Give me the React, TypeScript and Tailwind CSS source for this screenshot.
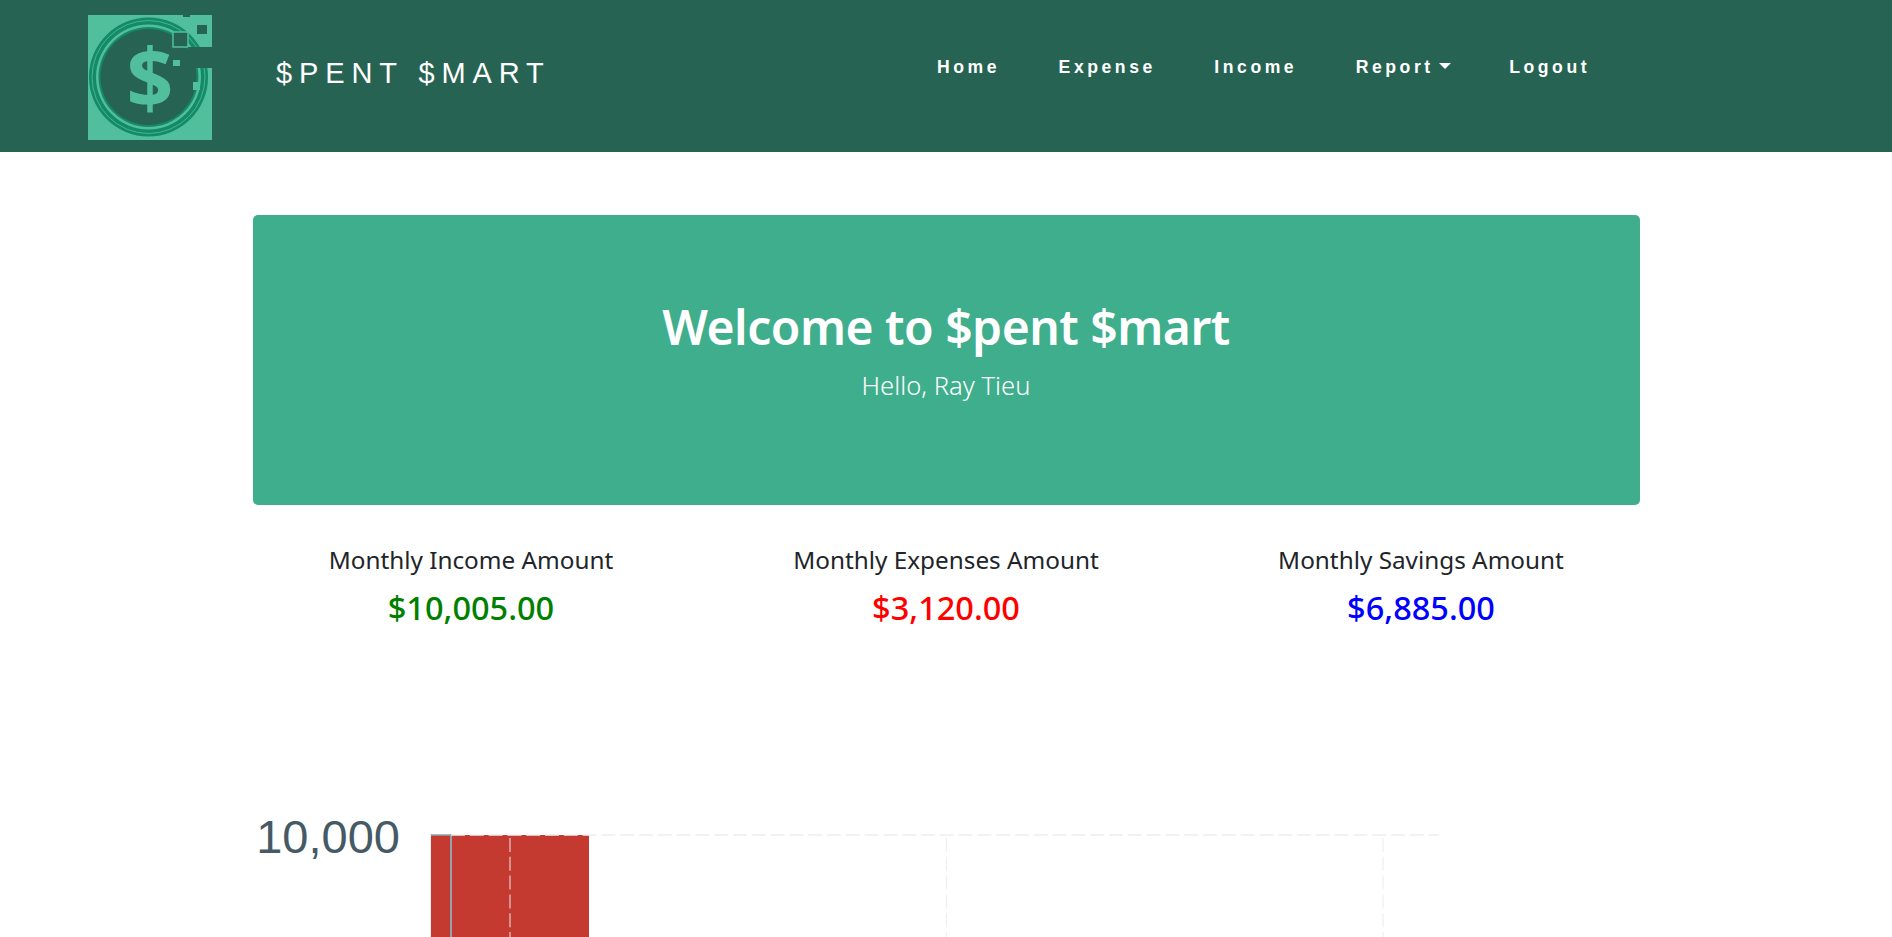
function Logo() {
  return (
    <svg width="124" height="125" viewBox="0 0 124 125" className="shrink-0">
      <rect width="124" height="125" fill="#52bf9c" />
      <circle cx="60.5" cy="62" r="59.5" fill="#148a66" />
      <circle cx="60.5" cy="62" r="56.5" fill="none" stroke="#52bf9c" strokeWidth="0.8" />
      <circle cx="60.5" cy="62" r="52.5" fill="#52bf9c" />
      <circle cx="60.5" cy="62" r="50" fill="#148a66" />
      <circle cx="60.5" cy="62" r="48" fill="#276352" />
      <text x="62" y="93" textAnchor="middle" fontFamily="'Open Sans', sans-serif" fontWeight="700" fontSize="82" fill="#52bf9c">$</text>
      <rect x="85" y="17" width="15" height="15" fill="#276352" stroke="#52bf9c" strokeWidth="1.5" />
      <rect x="109" y="10" width="10" height="9" fill="#276352" />
      <rect x="100" y="32" width="24" height="21" fill="#276352" />
      <rect x="85" y="45" width="7" height="6" fill="#52bf9c" />
      <rect x="105" y="67" width="7" height="8" fill="#52bf9c" />
      <rect x="95" y="0" width="7" height="2" fill="#276352" />
    </svg>
  );
}

const links = ["Home", "Expense", "Income"];

function Chart() {
  return (
    <svg width="1892" height="127" viewBox="0 0 1892 127" className="block">
      <rect x="430" y="24" width="159" height="103" fill="#c43a31" />
      <path d="M430 24H451" stroke="#90a4ae" strokeWidth="1.5" />
      <path d="M430.5 23.5V127" stroke="#eceff1" strokeWidth="1" />
      <path d="M451 23V127" stroke="#90a4ae" strokeWidth="2" />
      <path d="M451 24H1439" stroke="#eceff1" strokeWidth="1.5" strokeDasharray="14 4.8" />
      <path d="M510 27V127" stroke="#eceff1" strokeWidth="1.2" strokeOpacity="0.8" strokeDasharray="14 4.8" />
      <path d="M946.5 27V127" stroke="#eceff1" strokeWidth="1.2" strokeDasharray="14 4.8" />
      <path d="M1383 27V127" stroke="#eceff1" strokeWidth="1.2" strokeDasharray="14 4.8" />
      <text x="400" y="42" textAnchor="end" fontFamily="'Liberation Sans', Arial, sans-serif" fontSize="47" fill="#455a64">10,000</text>
    </svg>
  );
}

export default function App() {
  return (
    <div className="h-[937px] overflow-hidden bg-white font-['Noto_Sans',sans-serif] text-[#212529]">
      <header className="flex h-[152px] items-start bg-[#276352] pl-[88px] font-['Liberation_Sans',Arial,sans-serif] text-white">
        <div className="pt-[15px]"><Logo /></div>
        <div className="ml-[64px] w-[300px] shrink-0 pt-[55px] text-[29px] leading-[36px] tracking-[6.9px]">$PENT $MART</div>
        <nav className="ml-[361px] flex items-center gap-[58.5px] pt-[57px] text-[17.6px] leading-5 font-bold tracking-[3.55px]">
          {links.map((l) => (
            <a key={l}>{l}</a>
          ))}
          <a className="flex items-center">
            Report
            <span className="mb-[2px] ml-[5px] h-0 w-0 border-x-[6px] border-t-[6px] border-x-transparent border-t-white" />
          </a>
          <a>Logout</a>
        </nav>
      </header>
      <main className="pt-[63px]">
        <section className="mx-auto flex h-[290px] w-[1387px] flex-col items-center rounded-[5px] bg-[#3fae8d] pt-[78px] text-white">
          <h1 className="text-[48px] leading-[68px] font-semibold tracking-[-0.5px]">Welcome to $pent $mart</h1>
          <p className="mt-[8px] text-[25.6px] leading-[34px] font-light">Hello, Ray Tieu</p>
        </section>
        <section className="mx-auto mt-[39px] grid w-[1425px] grid-cols-3 text-center">
          {[
            ["Monthly Income Amount", "$10,005.00", "text-[#008000]"],
            ["Monthly Expenses Amount", "$3,120.00", "text-[#ff0000]"],
            ["Monthly Savings Amount", "$6,885.00", "text-[#0000ff]"],
          ].map(([a, b, c]) => (
            <div key={a}>
              <div className="text-[24.3px] leading-[32px]">{a}</div>
              <div className={`mt-[10px] text-[32.5px] leading-[44px] font-medium ${c}`}>{b}</div>
            </div>
          ))}
        </section>
        <div className="mt-[181px]"><Chart /></div>
      </main>
    </div>
  );
}
